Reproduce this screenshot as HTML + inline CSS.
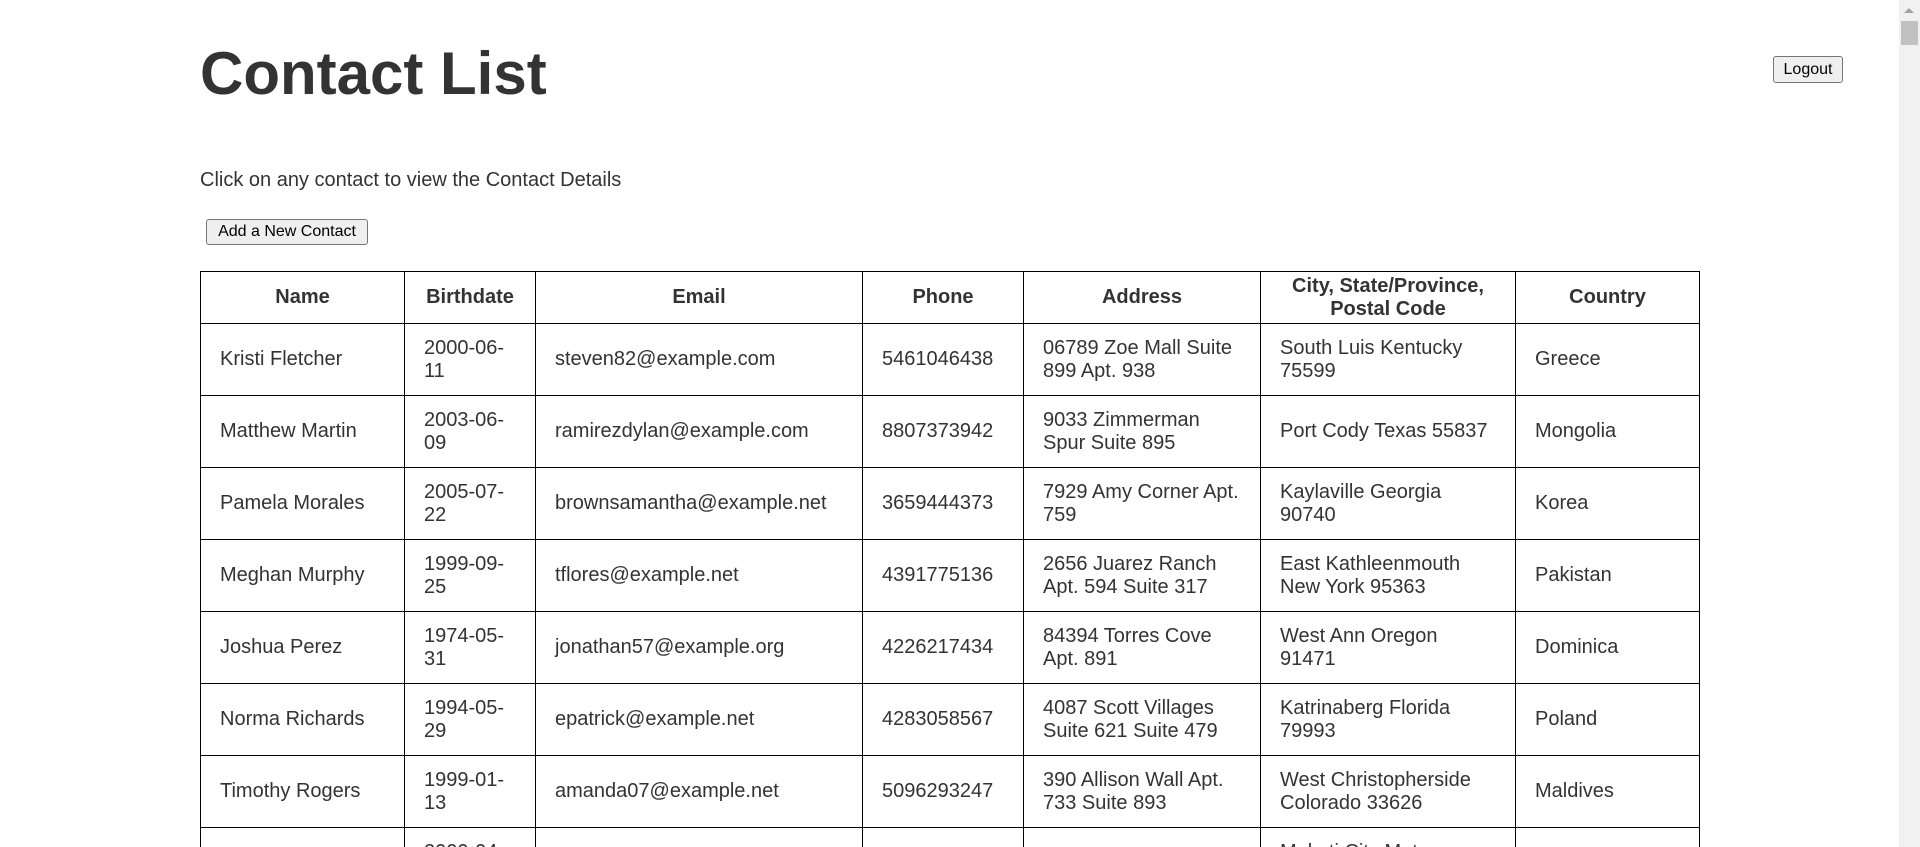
<!DOCTYPE html>
<html><head><meta charset="utf-8"><style>
html,body{margin:0;padding:0;background:#fff;overflow:hidden;}
body{width:1920px;height:847px;position:relative;font-family:"Liberation Sans",Arial,sans-serif;color:#333;}
h1{position:absolute;left:200px;top:29px;margin:0;font-size:60px;font-weight:bold;line-height:90px;color:#333;}
.logout{position:absolute;left:1773px;top:56px;width:70px;height:27px;}
button{font-family:"Liberation Sans",Arial,sans-serif;font-size:16px;background:#efefef;border:1px solid #767676;border-radius:3px;color:#000;padding:0;box-sizing:border-box;}
.info{position:absolute;left:200px;top:167px;font-size:20px;line-height:26px;}
.add{position:absolute;left:206px;top:219px;width:162px;height:26px;}
table{position:absolute;left:200px;top:271px;border-collapse:collapse;width:1499px;table-layout:fixed;font-size:20px;}
td,th{border:1px solid #000;padding:0 19px;line-height:23px;text-align:left;vertical-align:middle;color:#333;}
th{text-align:center;height:51px;padding:0 8px;font-weight:bold;}
td{height:71px;}
.sb{position:absolute;right:0;top:0;width:21px;height:847px;background:#f1f1f1;}
.sb .th{position:absolute;left:2px;top:21px;width:17px;height:24px;background:#c1c1c1;}
.sb .ar{position:absolute;left:5px;top:8px;width:0;height:0;border-left:5px solid transparent;border-right:5px solid transparent;border-bottom:5px solid #a3a3a3;}
</style></head><body>
<h1>Contact List</h1>
<button class="logout">Logout</button>
<div class="info">Click on any contact to view the Contact Details</div>
<button class="add">Add a New Contact</button>
<table>
<colgroup><col style="width:204px"><col style="width:131px"><col style="width:327px"><col style="width:161px"><col style="width:237px"><col style="width:255px"><col style="width:184px"></colgroup>
<tr><th>Name</th><th>Birthdate</th><th>Email</th><th>Phone</th><th>Address</th><th>City, State/Province, Postal Code</th><th>Country</th></tr>
<tr><td>Kristi Fletcher</td><td>2000-06-11</td><td>steven82@example.com</td><td>5461046438</td><td>06789 Zoe Mall Suite 899 Apt. 938</td><td>South Luis Kentucky 75599</td><td>Greece</td></tr>
<tr><td>Matthew Martin</td><td>2003-06-09</td><td>ramirezdylan@example.com</td><td>8807373942</td><td>9033 Zimmerman Spur Suite 895</td><td>Port Cody Texas 55837</td><td>Mongolia</td></tr>
<tr><td>Pamela Morales</td><td>2005-07-22</td><td>brownsamantha@example.net</td><td>3659444373</td><td>7929 Amy Corner Apt. 759</td><td>Kaylaville Georgia 90740</td><td>Korea</td></tr>
<tr><td>Meghan Murphy</td><td>1999-09-25</td><td>tflores@example.net</td><td>4391775136</td><td>2656 Juarez Ranch Apt. 594 Suite 317</td><td>East Kathleenmouth New York 95363</td><td>Pakistan</td></tr>
<tr><td>Joshua Perez</td><td>1974-05-31</td><td>jonathan57@example.org</td><td>4226217434</td><td>84394 Torres Cove Apt. 891</td><td>West Ann Oregon 91471</td><td>Dominica</td></tr>
<tr><td>Norma Richards</td><td>1994-05-29</td><td>epatrick@example.net</td><td>4283058567</td><td>4087 Scott Villages Suite 621 Suite 479</td><td>Katrinaberg Florida 79993</td><td>Poland</td></tr>
<tr><td>Timothy Rogers</td><td>1999-01-13</td><td>amanda07@example.net</td><td>5096293247</td><td>390 Allison Wall Apt. 733 Suite 893</td><td>West Christopherside Colorado 33626</td><td>Maldives</td></tr>
<tr><td>Sarah Smith</td><td>2000-04-17</td><td>sarah@example.com</td><td>5551234567</td><td>123 Main Street</td><td>Makati City Metro Manila 1200</td><td>Philippines</td></tr>
</table>
<div class="sb"><div class="ar"></div><div class="th"></div></div>
</body></html>
